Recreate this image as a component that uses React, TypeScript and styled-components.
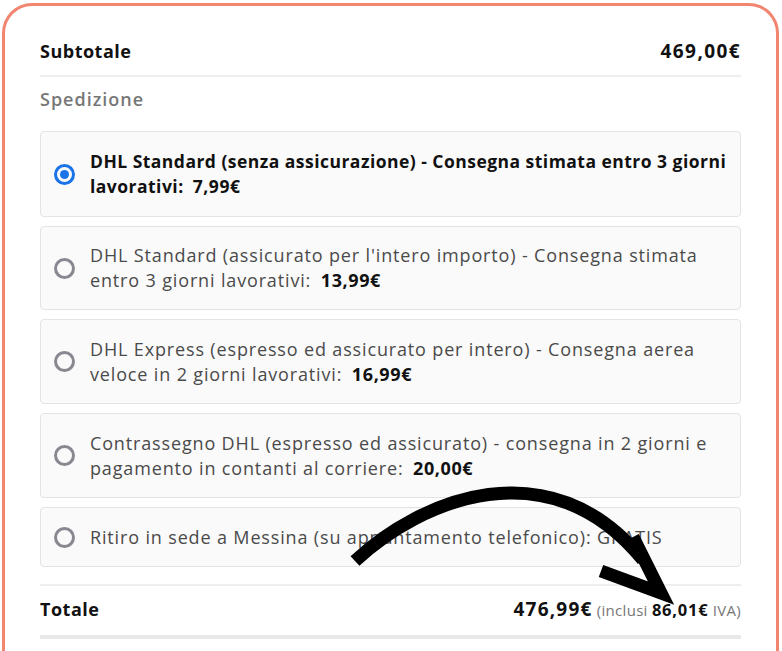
import React from "react";
import styled, { createGlobalStyle } from "styled-components";

const Global = createGlobalStyle`
  html, body { margin: 0; padding: 0; background: #ffffff; }
  body { font-family: "Open Sans", "Noto Sans", sans-serif; color: #1a1a1a; overflow: hidden; }
`;

const Page = styled.div`
  width: 782px;
  height: 651px;
  overflow: hidden;
  position: relative;
  padding: 3px 3px 0 2px;
  box-sizing: border-box;
`;

const Card = styled.div`
  border: 3px solid #f1856f;
  border-bottom: none;
  border-radius: 30px 30px 0 0;
  height: 700px;
  padding: 21px 35px 0 35px;
  box-sizing: border-box;
  background: #fff;
`;

const Row = styled.div<{ $heavy?: boolean }>`
  display: flex;
  justify-content: space-between;
  align-items: center;
  height: ${(p) => (p.$heavy ? 53 : 50)}px;
  padding-bottom: ${(p) => (p.$heavy ? 4 : 0)}px;
  border-bottom: ${(p) => (p.$heavy ? "4px solid #e8e8e8" : "2px solid #eeeeee")};
  box-sizing: border-box;
`;

const RowLabel = styled.span`
  font-size: 18px;
  font-weight: 700;
  color: #111;
  letter-spacing: 0.5px;
`;

const RowNumber = styled.span`
  font-size: 19px;
  font-weight: 700;
  color: #111;
  letter-spacing: 1.4px;
`;

const SectionTitle = styled.div`
  font-size: 18px;
  font-weight: 600;
  color: #777;
  line-height: 26px;
  padding-top: 9px;
  height: 54px;
  box-sizing: border-box;
  letter-spacing: 1px;
`;

const Options = styled.div`
  display: flex;
  flex-direction: column;
  gap: 9px;
`;

const Option = styled.div<{ $h: number }>`
  display: flex;
  align-items: center;
  gap: 15px;
  height: ${(p) => p.$h}px;
  box-sizing: border-box;
  padding: 0 10px 0 13px;
  border: 1px solid #e3e3e3;
  border-radius: 4px;
  background: #fafafa;
`;

const Radio = styled.span<{ $on?: boolean }>`
  flex: none;
  width: 15px;
  height: 15px;
  border-radius: 50%;
  border: 3px solid ${(p) => (p.$on ? "#1a73e8" : "#8a8790")};
  position: relative;
  &::after {
    content: "";
    display: ${(p) => (p.$on ? "block" : "none")};
    position: absolute;
    left: 50%;
    top: 50%;
    width: 9px;
    height: 9px;
    margin: -4.5px 0 0 -4.5px;
    border-radius: 50%;
    background: #1a73e8;
  }
`;

const OptText = styled.div<{ $on?: boolean }>`
  font-size: ${(p) => (p.$on ? 17.5 : 18)}px;
  line-height: 25px;
  color: ${(p) => (p.$on ? "#111" : "#4a4a4a")};
  font-weight: ${(p) => (p.$on ? 700 : 400)};
  letter-spacing: ${(p) => (p.$on ? 0.47 : 0.85)}px;
`;

const Price = styled.b`
  font-weight: 700;
  color: #111;
  margin-left: 4px;
  letter-spacing: 0.6px;
`;

const TotalSpacer = styled.div`
  height: 17px;
  border-bottom: 2px solid #eeeeee;
`;

const TotalValue = styled.span`
  font-size: 15px;
  color: #777;
  letter-spacing: 0.3px;
`;

const Big = styled.b`
  font-size: 19px;
  font-weight: 700;
  color: #111;
  letter-spacing: 1.2px;
`;

const Mid = styled.b`
  font-size: 16.5px;
  font-weight: 700;
  color: #111;
  letter-spacing: 0.8px;
`;

const Arrow = styled.svg`
  position: absolute;
  left: 0;
  top: 0;
  pointer-events: none;
`;

const opts = [
  { on: true, h: 86, text: "DHL Standard (senza assicurazione) - Consegna stimata entro 3 giorni lavorativi: ", price: "7,99€" },
  { on: false, h: 84, text: "DHL Standard (assicurato per l'intero importo) - Consegna stimata entro 3 giorni lavorativi: ", price: "13,99€" },
  { on: false, h: 85, text: "DHL Express (espresso ed assicurato per intero) - Consegna aerea veloce in 2 giorni lavorativi: ", price: "16,99€" },
  { on: false, h: 85, text: "Contrassegno DHL (espresso ed assicurato) - consegna in 2 giorni e pagamento in contanti al corriere: ", price: "20,00€" },
  { on: false, h: 60, text: "Ritiro in sede a Messina (su appuntamento telefonico): GRATIS", price: "" },
];

export default function App() {
  return (
    <Page>
      <Global />
      <Card>
        <Row>
          <RowLabel>Subtotale</RowLabel>
          <RowNumber>469,00€</RowNumber>
        </Row>
        <SectionTitle>Spedizione</SectionTitle>
        <Options>
          {opts.map((o, i) => (
            <Option key={i} $h={o.h}>
              <Radio $on={o.on} />
              <OptText $on={o.on}>
                {o.text}
                {o.price && <Price>{o.price}</Price>}
              </OptText>
            </Option>
          ))}
        </Options>
        <TotalSpacer />
        <Row $heavy>
          <RowLabel>Totale</RowLabel>
          <TotalValue>
            <Big>476,99€</Big> (inclusi <Mid>86,01€</Mid> IVA)
          </TotalValue>
        </Row>
      </Card>
      <Arrow width="782" height="651" viewBox="0 0 782 651">
        <path d="M355 561 C 420 500, 550 445, 643 560" fill="none" stroke="#000" strokeWidth="13" />
        <path d="M633 537 L 661 593 L 601 571" fill="none" stroke="#000" strokeWidth="13" strokeLinejoin="miter" />
      </Arrow>
    </Page>
  );
}
